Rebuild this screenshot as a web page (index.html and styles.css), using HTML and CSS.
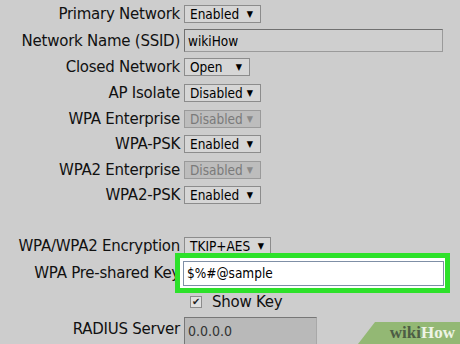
FILE: index.html
```html
<!DOCTYPE html>
<html lang="en">
<head>
    <meta charset="UTF-8">
    <title>Wireless Security</title>
    <link rel="stylesheet" href="styles.css">
</head>
<body>
    <div class="settings">
        <div class="label">Primary Network</div>
        <div class="field"><span class="select w-enabled">Enabled<span class="arrow">▼</span></span></div>

        <div class="label">Network Name (SSID)</div>
        <div class="field"><input class="text ssid" type="text" value="wikiHow"></div>

        <div class="label">Closed Network</div>
        <div class="field"><span class="select w-open">Open<span class="arrow">▼</span></span></div>

        <div class="label">AP Isolate</div>
        <div class="field"><span class="select w-enabled">Disabled<span class="arrow">▼</span></span></div>

        <div class="label">WPA Enterprise</div>
        <div class="field"><span class="select w-enabled disabled">Disabled<span class="arrow">▼</span></span></div>

        <div class="label">WPA-PSK</div>
        <div class="field"><span class="select w-enabled">Enabled<span class="arrow">▼</span></span></div>

        <div class="label">WPA2 Enterprise</div>
        <div class="field"><span class="select w-enabled disabled">Disabled<span class="arrow">▼</span></span></div>

        <div class="label">WPA2-PSK</div>
        <div class="field"><span class="select w-enabled">Enabled<span class="arrow">▼</span></span></div>

        <div class="spacer"></div>

        <div class="label">WPA/WPA2 Encryption</div>
        <div class="field"><span class="select w-tkip">TKIP+AES<span class="arrow">▼</span></span></div>

        <div class="label">WPA Pre-shared Key</div>
        <div class="field"><div class="highlight"><input class="text key" type="text" value="$%#@sample"></div></div>

        <div class="label"></div>
        <div class="field"><label class="show-key"><span class="check">✔</span>Show Key</label></div>

        <div class="label">RADIUS Server</div>
        <div class="field"><input class="text radius" type="text" value="0.0.0.0" disabled></div>
    </div>

    <div class="watermark"><span class="wiki">wiki</span><span class="how">How</span></div>
</body>
</html>
```

FILE: styles.css
```css
body {
    margin: 0;
    width: 460px;
    height: 344px;
    overflow: hidden;
    background-color: #cdcdcd;
    font-family: "DejaVu Sans", Verdana, sans-serif;
    font-size: 15px;
    letter-spacing: -0.25px;
    color: #111;
    position: relative;
}
.settings {
    display: grid;
    grid-template-columns: 180px 1fr;
    grid-template-rows: 26px 27px 26px 26px 25px 26px 25px 26px 24px 27px 28px 28px 28px;
    column-gap: 4px;
    padding-top: 1px;
}
.spacer {
    grid-column: 1 / 3;
}
.label {
    display: flex;
    align-items: center;
    justify-content: flex-end;
    white-space: nowrap;
}
.field {
    display: flex;
    align-items: center;
}
.select,
.text {
    font-family: "DejaVu Sans Condensed", "DejaVu Sans", sans-serif;
    font-stretch: condensed;
    font-size: 13.5px;
    letter-spacing: 0;
}
.select {
    box-sizing: border-box;
    height: 18px;
    display: flex;
    align-items: center;
    padding: 0 7px 0 5px;
    border: 1px solid #8c8c8c;
    background: #d6d6d6;
    color: #000;
}
.select .arrow {
    margin-left: auto;
    font-size: 9px;
}
.w-enabled { width: 77px; }
.w-open { width: 66px; }
.w-tkip { width: 87px; padding-right: 6px; }
.select.disabled {
    background: #bdbdbd;
    color: #7a7a7a;
    border-color: #9a9a9a;
}
.select.disabled .arrow {
    color: #8a8a8a;
}
.text {
    box-sizing: border-box;
    margin: 0;
    padding: 0 3px;
    color: #000;
}
.ssid {
    width: 259px;
    height: 23px;
    background: #cfcfcf;
    border: 1px solid #707070;
    border-right-color: #9a9a9a;
    border-bottom-color: #9a9a9a;
}
.highlight {
    box-sizing: border-box;
    margin-left: -9px;
    width: 275px;
    height: 40px;
    border: 5px solid #2de12a;
    background: #fff;
    display: flex;
    align-items: center;
    padding-left: 3px;
}
.key {
    width: 261px;
    height: 25px;
    background: #fff;
    border: 1px solid #7f8fa6;
    outline: none;
}
.show-key {
    display: flex;
    align-items: center;
    font-size: 15px;
    margin-left: 6px;
    margin-top: 2px;
}
.check {
    box-sizing: border-box;
    width: 12px;
    height: 12px;
    border: 1px solid #8c8c8c;
    background: #e0e0e0;
    font-size: 10px;
    line-height: 10px;
    text-align: center;
    color: #222;
    margin-right: 10px;
}
.radius {
    width: 133px;
    height: 28px;
    margin-top: 3px;
    background: #b9b9b9;
    border: 1px solid #777;
    border-right-color: #a8a8a8;
    border-bottom-color: #a8a8a8;
    color: #333;
    font-size: 14px;
}
.watermark {
    position: absolute;
    right: 0;
    bottom: 0;
    width: 97px;
    height: 22px;
    background: #93b874;
    clip-path: polygon(17px 0, 100% 0, 100% 100%, 0 100%);
    display: flex;
    align-items: center;
    justify-content: flex-end;
    padding-right: 5px;
    font-family: "Liberation Serif", "Times New Roman", serif;
    font-weight: bold;
    font-size: 17px;
    letter-spacing: 0;
}
.wiki {
    color: #4d5d45;
}
.how {
    color: #eef4e6;
}
```
